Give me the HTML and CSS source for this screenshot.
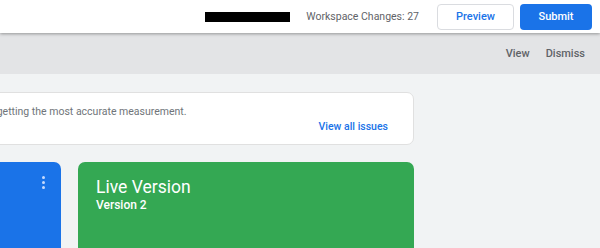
FILE: index.html
```html
<!DOCTYPE html>
<html lang="en">
<head>
    <meta charset="UTF-8">
    <meta name="viewport" content="width=device-width, initial-scale=1.0">
    <title>Workspace</title>
    <link rel="stylesheet" href="styles.css">
</head>
<body>
    <header class="topbar">
        <div class="redacted"></div>
        <span class="changes">Workspace Changes: 27</span>
        <button class="btn btn-outline">Preview</button>
        <button class="btn btn-primary">Submit</button>
    </header>

    <div class="notice">
        <a class="notice-link" href="#">View</a>
        <a class="notice-link" href="#">Dismiss</a>
    </div>

    <main class="content">
        <div class="wrapper">
            <div class="issue-card">
                <p class="issue-text">Resolve the tag issues to make sure that you are getting the most accurate measurement.</p>
                <a class="issue-link" href="#">View all issues</a>
            </div>
            <div class="versions">
                <div class="version-card workspace">
                    <span class="kebab"><i></i><i></i><i></i></span>
                </div>
                <div class="version-card live">
                    <h2>Live Version</h2>
                    <p>Version 2</p>
                </div>
            </div>
        </div>
    </main>
</body>
</html>
```

FILE: styles.css
```css
* {
    box-sizing: border-box;
}

body {
    margin: 0;
    height: 248px;
    overflow: hidden;
    background-color: #f1f3f4;
    font-family: Roboto, "Liberation Sans", Arial, sans-serif;
    color: #5f6368;
}

.topbar {
    position: relative;
    z-index: 2;
    display: flex;
    justify-content: flex-end;
    align-items: center;
    height: 33px;
    padding-right: 8px;
    background: #fff;
    box-shadow: 0 1px 3px rgba(0, 0, 0, 0.35);
}

.redacted {
    width: 85px;
    height: 10px;
    margin-right: 16px;
    background: #000;
}

.changes {
    font-size: 10.5px;
    margin-right: 18px;
}

.btn {
    height: 26px;
    border-radius: 4px;
    font-family: inherit;
    font-size: 11px;
    font-weight: 500;
    cursor: pointer;
}

.btn-outline {
    width: 77px;
    margin-right: 6px;
    border: 1px solid #dadce0;
    background: #fff;
    color: #1a73e8;
}

.btn-primary {
    width: 72px;
    border: none;
    background: #1a73e8;
    color: #fff;
}

.notice {
    display: flex;
    justify-content: flex-end;
    align-items: center;
    gap: 16px;
    height: 41px;
    padding-right: 15px;
    background: #e3e4e6;
}

.notice-link {
    font-size: 11px;
    font-weight: 500;
    color: #5f6368;
    text-decoration: none;
}

.content {
    padding-top: 18px;
}

.wrapper {
    width: 689px;
    margin-left: -275px;
}

.issue-card {
    display: flex;
    justify-content: space-between;
    height: 53px;
    padding: 11px 25px 0 43px;
    border: 1px solid #e0e0e0;
    border-radius: 7px;
    background: #fff;
}

.issue-text {
    margin: 0;
    font-size: 10.5px;
    line-height: 15px;
    white-space: nowrap;
    color: #70757a;
}

.issue-link {
    align-self: center;
    flex-shrink: 0;
    margin-top: 4px;
    font-size: 10.5px;
    font-weight: 500;
    color: #1a73e8;
    text-decoration: none;
}

.versions {
    display: grid;
    grid-template-columns: repeat(2, 1fr);
    gap: 17px;
    margin-top: 17px;
}

.version-card {
    position: relative;
    height: 120px;
    padding: 14px 18px;
    border-radius: 7px;
    color: #fff;
}

.workspace {
    background: #1a73e8;
}

.live {
    background: #34a853;
}

.live h2 {
    margin: 0;
    font-size: 17.5px;
    font-weight: 400;
    line-height: 22px;
}

.live p {
    margin: 0;
    font-size: 12px;
    font-weight: 500;
    line-height: 14px;
}

.kebab {
    position: absolute;
    top: 14px;
    right: 16px;
    display: flex;
    flex-direction: column;
    gap: 2px;
}

.kebab i {
    width: 3px;
    height: 3px;
    border-radius: 50%;
    background: #c6dafc;
}
```
